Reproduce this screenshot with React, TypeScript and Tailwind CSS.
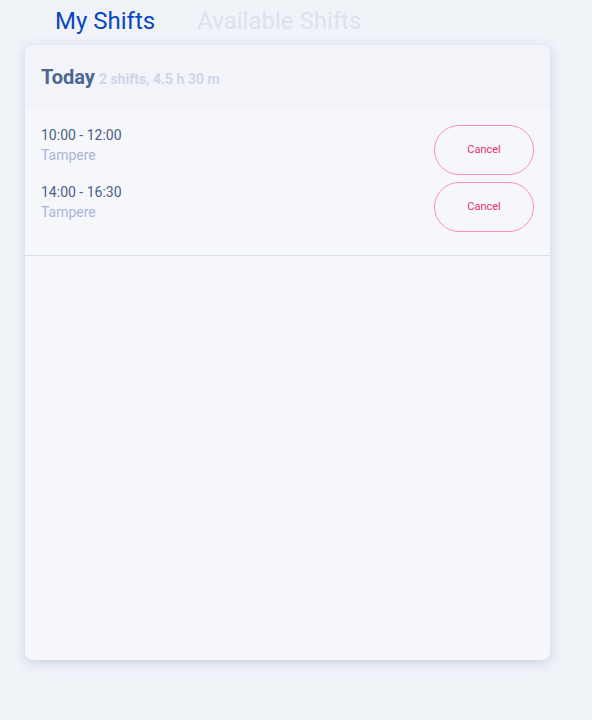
const SHIFTS = [
  { time: "10:00 - 12:00", place: "Tampere" },
  { time: "14:00 - 16:30", place: "Tampere" },
];

export default function App() {
  return (
    <div className="min-h-[720px] w-[592px] bg-[#f0f3f8] font-['Roboto',sans-serif]">
      <div className="flex h-[42px] items-center gap-[42px] pl-[55px]">
        <span className="text-[24px] leading-none text-[#0b46c1]">My Shifts</span>
        <span className="text-[24px] leading-none text-[#dde2ef]">Available Shifts</span>
      </div>
      <div className="mx-[25px] mt-[3px] h-[615px] w-[525px] overflow-hidden rounded-lg bg-[#f6f7fb] shadow-[0_3px_12px_rgba(130,145,195,0.35)]">
        <div className="flex h-[63px] items-baseline gap-1 bg-[#f3f4f9] px-4 pt-[17px]">
          <span className="text-[20px] font-bold text-[#4b6690]">Today</span>
          <span className="text-[14px] font-bold text-[#cfd6e6]">2 shifts, 4.5 h 30 m</span>
        </div>
        <div className="flex flex-col gap-[7px] border-b border-[#dcdee6] pt-[17px] pb-[23px] pl-4 pr-4">
          {SHIFTS.map((s) => (
            <div key={s.time} className="flex h-[50px] items-start justify-between">
              <div className="flex flex-col text-[14px] leading-5">
                <span className="text-[#4a6089]">{s.time}</span>
                <span className="text-[#a7b8d6]">{s.place}</span>
              </div>
              <button
                type="button"
                className="h-[50px] w-[100px] rounded-full border border-[#ff8fb8] text-[11px] text-[#e9306f]"
              >
                Cancel
              </button>
            </div>
          ))}
        </div>
      </div>
    </div>
  );
}
